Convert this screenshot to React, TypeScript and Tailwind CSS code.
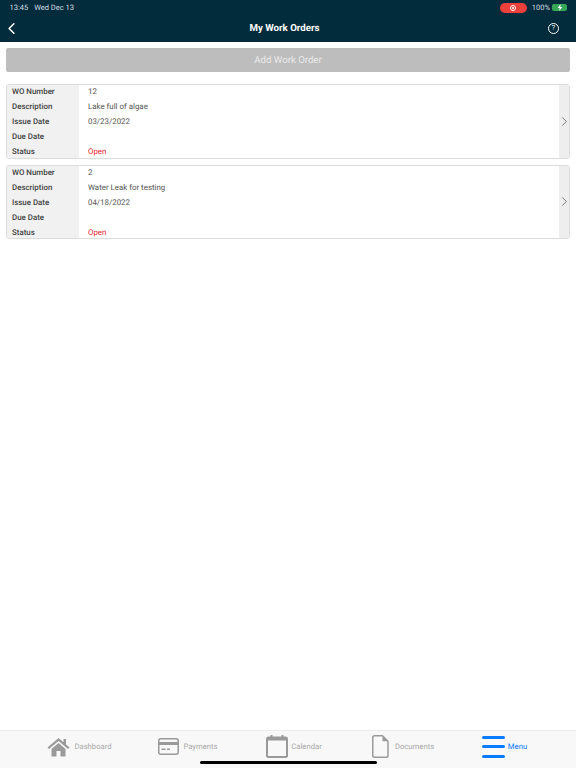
import React from 'react';
import { ChevronLeft, ChevronRight } from 'lucide-react';

interface WorkOrder {
  number: string;
  description: string;
  issueDate: string;
}

const orders: WorkOrder[] = [
  { number: '12', description: 'Lake full of algae', issueDate: '03/23/2022' },
  { number: '2', description: 'Water Leak for testing', issueDate: '04/18/2022' },
];

const Row = ({ label, children }: { label: string; children?: React.ReactNode }) => (
  <div className="flex h-[15px] shrink-0 items-center">
    <div className="w-[72px] pl-[5px] text-[7.9px] font-medium text-[#3f3f3f]">{label}</div>
    <div className="flex-1 pl-[9px] text-[7.9px] text-[#555555]">{children}</div>
  </div>
);

const OrderCard = ({ order }: { order: WorkOrder }) => (
  <div className="relative flex h-[74.5px] overflow-hidden rounded-[3px] border border-[#dcdcdc] bg-white">
    <div className="absolute inset-y-0 left-0 w-[72px] bg-[#f1f1f1]" />
    <div className="relative -mt-[0.5px] flex-1">
      <Row label="WO Number">{order.number}</Row>
      <Row label="Description">{order.description}</Row>
      <Row label="Issue Date">{order.issueDate}</Row>
      <Row label="Due Date" />
      <Row label="Status">
        <span className="text-[#e8232a]">Open</span>
      </Row>
    </div>
    <div className="relative flex w-[10px] items-center justify-center bg-[#eeeeee]">
      <ChevronRight size={15} strokeWidth={1.2} className="shrink-0 text-[#555555]" />
    </div>
  </div>
);

const HomeIcon = () => (
  <svg width="23" height="20" viewBox="0 0 23 20" fill="#9a9a9a">
    <path d="M11.5 1 L0.5 10.5 L2 12 L11.5 4 L21 12 L22.5 10.5 L19 7.4 L19 2 L16.5 2 L16.5 5.2 Z" />
    <path d="M4.5 12 L11.5 6 L18.5 12 L18.5 19.5 L13.5 19.5 L13.5 14 L9.5 14 L9.5 19.5 L4.5 19.5 Z" />
  </svg>
);

const CardIcon = () => (
  <svg width="21" height="17" viewBox="0 0 21 17" fill="none">
    <rect x="0.75" y="0.75" width="19.5" height="15.5" rx="2" stroke="#9a9a9a" strokeWidth="1.5" />
    <rect x="1" y="4" width="19" height="3" fill="#9a9a9a" />
    <rect x="3.5" y="10.5" width="4" height="1.5" fill="#9a9a9a" />
    <rect x="9" y="10.5" width="3" height="1.5" fill="#9a9a9a" />
  </svg>
);

const CalendarIcon = () => (
  <svg width="22" height="23" viewBox="0 0 22 23" fill="none">
    <rect x="1" y="2.5" width="20" height="19.5" rx="1.5" stroke="#9a9a9a" strokeWidth="2" />
    <rect x="1" y="2.5" width="20" height="3" fill="#9a9a9a" />
    <rect x="4.5" y="0" width="2" height="3" fill="#9a9a9a" />
    <rect x="15.5" y="0" width="2" height="3" fill="#9a9a9a" />
  </svg>
);

const DocIcon = () => (
  <svg width="17" height="23" viewBox="0 0 17 23" fill="none">
    <path d="M2.5 0.75 H10.5 L16 6.25 V20.5 A1.75 1.75 0 0 1 14.25 22.25 H2.5 A1.75 1.75 0 0 1 0.75 20.5 V2.5 A1.75 1.75 0 0 1 2.5 0.75 Z" stroke="#9a9a9a" strokeWidth="1.5" />
    <path d="M10.5 0.75 V6.25 H16 Z" fill="#9a9a9a" />
  </svg>
);

const MenuIcon = () => (
  <div className="flex h-[22px] w-[23px] flex-col justify-between">
    <div className="h-[3px] rounded-full bg-[#0a7aff]" />
    <div className="h-[3px] rounded-full bg-[#0a7aff]" />
    <div className="h-[3px] rounded-full bg-[#0a7aff]" />
  </div>
);

const tabs = [
  { label: 'Dashboard', icon: <HomeIcon />, width: 'w-[109px]', gap: 'gap-[4px]', active: false },
  { label: 'Payments', icon: <CardIcon />, width: 'w-[108px]', gap: 'gap-[4px]', active: false },
  { label: 'Calendar', icon: <CalendarIcon />, width: 'w-[104px]', gap: 'gap-[3px]', active: false },
  { label: 'Documents', icon: <DocIcon />, width: 'w-[114px]', gap: 'gap-[6px]', active: false },
  { label: 'Menu', icon: <MenuIcon />, width: 'w-[89px]', gap: 'gap-[3px]', active: true },
];

export default function App() {
  return (
    <div className="relative flex h-[768px] w-[576px] flex-col overflow-hidden bg-white font-['Roboto',sans-serif] [text-rendering:geometricPrecision]">
      {/* Status + nav bar */}
      <div className="h-[42px] shrink-0 bg-[#022b3c] text-white">
        <div className="flex h-[14px] items-center justify-between pl-[9.5px] pr-[9px] pt-[1px] text-[7.5px] text-[#d5dde0]">
          <div className="flex gap-[6px]">
            <span>13:45</span>
            <span>Wed Dec 13</span>
          </div>
          <div className="flex items-center">
            <div className="flex h-[10px] w-[27px] items-center justify-center rounded-full bg-[#f0403c]">
              <div className="flex h-[6px] w-[6px] items-center justify-center rounded-full border border-white">
                <div className="h-[2px] w-[2px] rounded-full bg-white" />
              </div>
            </div>
            <span className="ml-[5px]">100%</span>
            <div className="ml-[2px] flex h-[7px] w-[15px] items-center justify-center rounded-[2px] bg-[#35a858]">
              <svg width="6" height="7" viewBox="0 0 5 6" fill="#ffffff">
                <path d="M3 0 L0.5 3.4 H2.2 L1.8 6 L4.5 2.5 H2.7 Z" />
              </svg>
            </div>
          </div>
        </div>
        <div className="flex h-[28px] items-center justify-between pl-[2px] pr-[17px]">
          <ChevronLeft size={19} strokeWidth={2} />
          <span className="pt-[2px] text-[9.7px] font-bold">My Work Orders</span>
          <div className="flex h-[11px] w-[11px] items-center justify-center rounded-full border border-white text-[7px] leading-none">?</div>
        </div>
      </div>

      {/* Content */}
      <div className="flex flex-1 flex-col px-[6px] pt-[6px]">
        <div className="flex h-[24px] items-center justify-center rounded-[2px] bg-[#bdbdbd] pt-[2px] text-[9.6px] text-[#eaeaea]">
          Add Work Order
        </div>
        <div className="mt-[12px] flex flex-col gap-[6px]">
          {orders.map((o) => (
            <OrderCard key={o.number} order={o} />
          ))}
        </div>
      </div>

      {/* Tab bar */}
      <div className="flex h-[38px] shrink-0 items-center border-t border-[#ececec] bg-[#f8f8f8] pb-[6px] pl-[25px]">
        {tabs.map((t) => (
          <div key={t.label} className={`flex items-center justify-center ${t.gap} ${t.width}`}>
            {t.icon}
            <span className={`text-[7.7px] ${t.active ? 'text-[#0a7aff]' : 'text-[#a8a8a8]'}`}>{t.label}</span>
          </div>
        ))}
      </div>

      {/* Home indicator */}
      <div className="absolute bottom-[4px] left-[200px] h-[3px] w-[177px] rounded-full bg-black" />
    </div>
  );
}
